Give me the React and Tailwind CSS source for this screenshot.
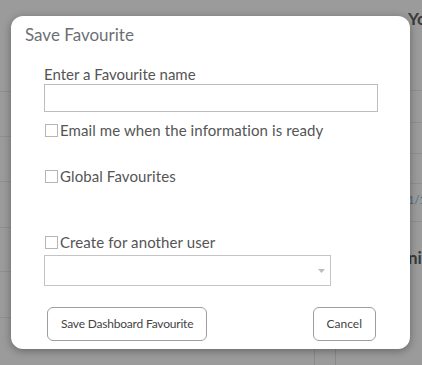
export default function App() {
  const font = { fontFamily: "Lato, 'Noto Sans', sans-serif" };
  const leftRows = [45, 45, 46, 44, 46];
  return (
    <div className="relative w-[422px] h-[365px] overflow-hidden bg-[#9b9b9b]" style={font}>
      {/* page behind the overlay */}
      <div className="flex h-full">
        <div className="w-[12px] flex flex-col">
          <div className="h-[92px] border-b border-[#8f8f8f]" />
          {leftRows.map((h, i) => (
            <div key={i} className="border-b border-[#8f8f8f]" style={{ height: h }} />
          ))}
        </div>
        <div className="flex-1 flex items-end justify-end pr-[72px]">
          <div className="flex h-[20px] w-[22px] border-l border-r border-[#8a8a8a]" />
        </div>
        <div className="w-[14px] flex flex-col">
          <div className="h-[91px] pt-[8px] border-b border-[#8f8f8f] text-[17px] leading-[22px] font-bold text-[#3a3a3a] whitespace-nowrap">Yo</div>
          <div className="h-[32px] border-b border-[#8f8f8f]" />
          <div className="h-[31px] border-b border-[#8f8f8f]" />
          <div className="h-[30px] border-b border-[#8f8f8f]" />
          <div className="h-[38px] border-b border-[#8f8f8f] pt-[9px] text-[11px] leading-[14px] text-[#4a6f8a] whitespace-nowrap">1/1</div>
          <div className="pt-[25px] text-[17px] leading-[22px] font-bold text-[#3a3a3a] whitespace-nowrap">ni</div>
        </div>
      </div>

      {/* modal */}
      <div className="absolute left-[11px] top-[16px] w-[399px] h-[333px] bg-white rounded-[12px] shadow-[0_2px_8px_rgba(0,0,0,0.35)]">
        <div className="pl-[14px] pt-[9px] text-[17px] leading-[20px] text-[#6d6f74]">Save Favourite</div>
        <div className="pl-[33px] pr-[32px] pt-[20px] text-[#555]">
          <div className="text-[15px] leading-[18px]">Enter a Favourite name</div>
          <div className="mt-[1px] h-[28px] border border-[#bdbdbd]" />
          <div className="mt-[9px] flex items-center gap-[2px] text-[15px] leading-[18px] tracking-[0.1px]">
            <span className="w-[13px] h-[13px] border border-[#b5b5b5] ml-[1px]" />
            <span>Email me when the information is ready</span>
          </div>
          <div className="mt-[28px] flex items-center gap-[2px] text-[15px] leading-[18px] tracking-[0.1px]">
            <span className="w-[13px] h-[13px] border border-[#b5b5b5] ml-[1px]" />
            <span>Global Favourites</span>
          </div>
          <div className="mt-[48px] flex items-center gap-[2px] text-[15px] leading-[18px] tracking-[0.1px]">
            <span className="w-[13px] h-[13px] border border-[#b5b5b5] ml-[1px]" />
            <span>Create for another user</span>
          </div>
          <div className="mt-[4px] w-[287px] h-[31px] border border-[#c4c4c4] flex items-center justify-end pr-[5px]">
            <svg width="7" height="4" viewBox="0 0 7 4"><path d="M0 0h7L3.5 4z" fill="#bdbdbd" /></svg>
          </div>
          <div className="mt-[21px] flex justify-between pl-[3px] pr-[2px]">
            <button className="h-[34px] px-[13px] border border-[#9e9e9e] rounded-[6px] text-[12px] tracking-[-0.2px] text-[#444] bg-white">Save Dashboard Favourite</button>
            <button className="h-[34px] px-[13px] border border-[#9e9e9e] rounded-[6px] text-[12px] text-[#444] bg-white">Cancel</button>
          </div>
        </div>
      </div>
    </div>
  );
}
